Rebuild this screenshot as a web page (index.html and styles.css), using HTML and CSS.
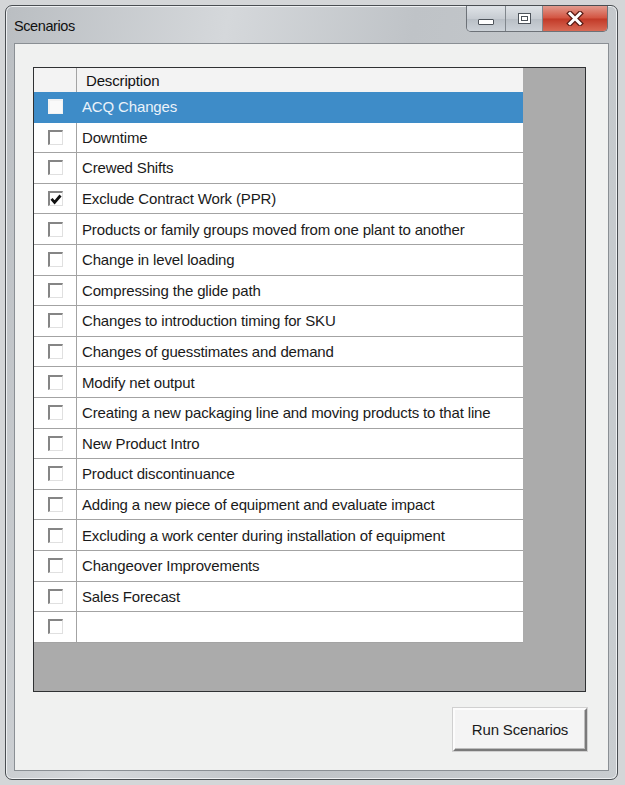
FILE: index.html
```html
<!DOCTYPE html>
<html lang="en">
<head>
  <meta charset="UTF-8" />
  <title>Scenarios</title>
  <link rel="stylesheet" href="styles.css">
</head>
<body>
  <div class="window">
    <div class="titlebar">
      <span class="caption">Scenarios</span>
      <div class="caption-buttons">
        <div class="cbtn cbtn-min"><span class="min-icon"></span></div>
        <div class="cbtn cbtn-max"><span class="max-icon"></span></div>
        <div class="cbtn cbtn-close">
          <svg width="18" height="15" viewBox="0 0 18 15">
            <path d="M4 2.5 L14 12.5 M14 2.5 L4 12.5" stroke="#5a1d16" stroke-width="5.4" stroke-linecap="square"/>
            <path d="M4 2.5 L14 12.5 M14 2.5 L4 12.5" stroke="#fff" stroke-width="3" stroke-linecap="square"/>
          </svg>
        </div>
      </div>
    </div>

    <div class="client">
      <div class="grid">
        <div class="table">
          <div class="row header">
            <div class="cell-check"></div>
            <div class="cell-text">Description</div>
          </div>
          <div id="rows"></div>
        </div>
      </div>
      <div class="actions">
        <button class="run-button">Run Scenarios</button>
      </div>
    </div>
  </div>

  <script>
    const scenarios = [
      { text: 'ACQ Changes', selected: true },
      { text: 'Downtime' },
      { text: 'Crewed Shifts' },
      { text: 'Exclude Contract Work (PPR)', checked: true },
      { text: 'Products or family groups moved from one plant to another' },
      { text: 'Change in level loading' },
      { text: 'Compressing the glide path' },
      { text: 'Changes to introduction timing for SKU' },
      { text: 'Changes of guesstimates and demand' },
      { text: 'Modify net output' },
      { text: 'Creating a new packaging line and moving products to that line' },
      { text: 'New Product Intro' },
      { text: 'Product discontinuance' },
      { text: 'Adding a new piece of equipment and evaluate impact' },
      { text: 'Excluding a work center during installation of equipment' },
      { text: 'Changeover Improvements' },
      { text: 'Sales Forecast' },
      { text: '' }
    ];

    const tick = '<svg width="12" height="11" viewBox="0 0 12 11"><path d="M1.5 4.8 L4.6 8.4 L10.5 1.5" fill="none" stroke="#111" stroke-width="2.8"/></svg>';

    document.getElementById('rows').innerHTML = scenarios.map(s => `
      <div class="row${s.selected ? ' selected' : ''}">
        <div class="cell-check"><span class="checkbox">${s.checked ? tick : ''}</span></div>
        <div class="cell-text">${s.text}</div>
      </div>`).join('');
  </script>
</body>
</html>
```

FILE: styles.css
```css
* {
  margin: 0;
  padding: 0;
  box-sizing: border-box;
}

body {
  font-family: "Liberation Sans", Arial, sans-serif;
  background: #d4d6d8;
  width: 625px;
  height: 785px;
  padding: 5px 0 0 5px;
}

.window {
  width: 613px;
  height: 775px;
  border: 1px solid #4a4e52;
  border-radius: 7px;
  background: linear-gradient(100deg, #babec2 0%, #d5d8db 30%, #bfc3c7 55%, #c9cdd0 100%);
  box-shadow: inset 0 0 0 1px #eef0f2;
  display: flex;
  flex-direction: column;
  padding: 0 8px 8px 8px;
}

.titlebar {
  height: 37px;
  display: flex;
  justify-content: space-between;
  align-items: flex-start;
}

.caption {
  font-size: 14.5px;
  color: #111;
  padding: 12px 0 0 0;
  letter-spacing: -0.4px;
}

.caption-buttons {
  display: flex;
  height: 26px;
  margin-right: 1px;
  border: 1px solid #6d7278;
  border-top: none;
  border-radius: 0 0 5px 5px;
  overflow: hidden;
}

.cbtn {
  display: flex;
  align-items: center;
  justify-content: center;
}

.cbtn-min,
.cbtn-max {
  width: 39px;
  background: linear-gradient(#dfe3e7, #c7ccd2 50%, #b8bec5 51%, #ccd2d8);
  border-right: 1px solid #80868c;
}

.cbtn-max {
  width: 37px;
}

.cbtn-close {
  width: 64px;
  background: linear-gradient(#e29a8d, #d35441 48%, #c23a28 52%, #d86a55);
}

.min-icon {
  width: 16px;
  height: 6px;
  margin-top: 6px;
  background: #fff;
  border: 1px solid #4d535a;
  border-radius: 1px;
}

.max-icon {
  width: 13px;
  height: 11px;
  border: 1px solid #4d535a;
  background: #fff;
  box-shadow: inset 0 0 0 2px #fff, inset 0 0 0 3px #4d535a;
}

.client {
  flex: 1;
  background: #f0f1f0;
  border: 1px solid #8a8f94;
  padding: 23px 21px 19px 18px;
  display: flex;
  flex-direction: column;
}

.grid {
  width: 553px;
  height: 625px;
  border: 1px solid #2f3133;
  background: #ababab;
}

.table {
  width: 489px;
  background: #fff;
}

.row {
  display: flex;
  height: 30.6px;
  border-bottom: 1px solid #a3a3a3;
  font-size: 15px;
  letter-spacing: -0.15px;
  color: #1a1a1a;
}

.row.header {
  height: 24px;
  background: #f3f3f3;
  border-bottom: none;
}

.row.header .cell-text {
  padding-left: 9px;
  color: #111;
}

.cell-check {
  width: 43px;
  border-right: 1px solid #a3a3a3;
  display: flex;
  align-items: center;
  justify-content: center;
}

.cell-text {
  flex: 1;
  display: flex;
  align-items: center;
  padding-left: 5px;
  white-space: nowrap;
}

.row.selected {
  background: #3e8cc8;
  color: #eaf2fa;
  border-bottom-color: #3e8cc8;
}

.row.selected .cell-check {
  border-right-color: #3e8cc8;
}

.checkbox {
  width: 15px;
  height: 15px;
  margin-left: 1px;
  background: #fff;
  border-top: 2px solid #858585;
  border-left: 2px solid #858585;
  border-right: 1px solid #e0e0e0;
  border-bottom: 1px solid #e0e0e0;
  display: flex;
  align-items: center;
  justify-content: center;
}

.row.selected .checkbox {
  border-color: #f2f2f2;
  background: #fafafa;
}

.actions {
  display: flex;
  justify-content: flex-end;
  margin-top: 16px;
}

.run-button {
  width: 134px;
  height: 43px;
  font-family: "Liberation Sans", Arial, sans-serif;
  font-size: 15px;
  letter-spacing: -0.15px;
  color: #1a1a1a;
  background: #f4f4f4;
  border-top: 2px solid #fcfcfc;
  border-left: 2px solid #fcfcfc;
  border-right: 2px solid #7a7a7a;
  border-bottom: 2px solid #7a7a7a;
  box-shadow: inset -1px -1px 0 #bdbdbd, 0 0 0 1px #d0d0d0;
}
```
